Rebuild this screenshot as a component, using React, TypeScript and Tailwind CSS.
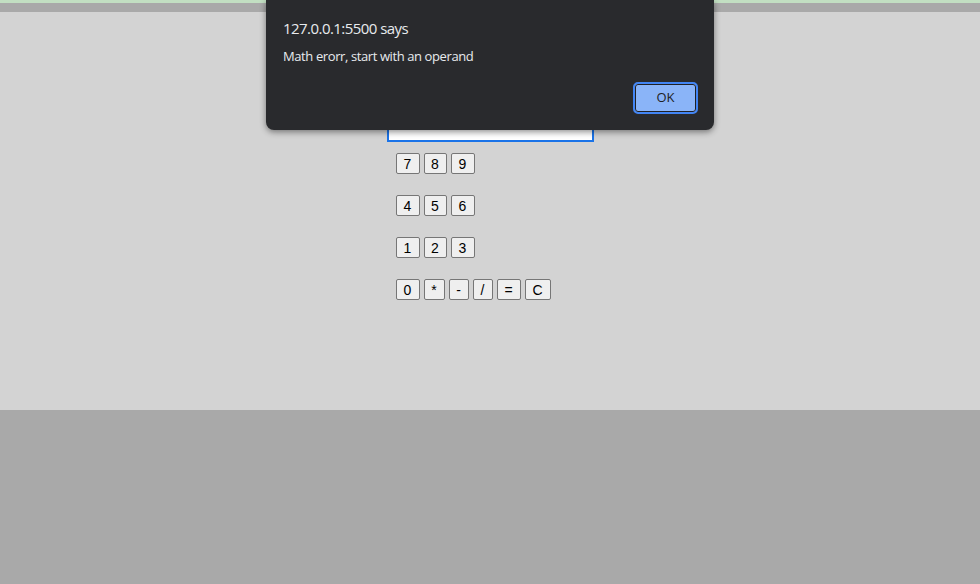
import React from 'react';

const rows = [
  [{ k: '7', w: 'w-[24px]' }, { k: '8', w: 'w-[23px]' }, { k: '9', w: 'w-[24px]' }],
  [{ k: '4', w: 'w-[24px]' }, { k: '5', w: 'w-[23px]' }, { k: '6', w: 'w-[24px]' }],
  [{ k: '1', w: 'w-[24px]' }, { k: '2', w: 'w-[23px]' }, { k: '3', w: 'w-[24px]' }],
  [
    { k: '0', w: 'w-[24px]' },
    { k: '*', w: 'w-[21px]' },
    { k: '-', w: 'w-[20px]' },
    { k: '/', w: 'w-[20px]' },
    { k: '=', w: 'w-[24px]' },
    { k: 'C', w: 'w-[26px]' },
  ],
];

const KeyButton = ({ label, w }: { label: string; w: string }) => (
  <button
    className={`${w} h-[21px] p-0 bg-[#efefef] border border-[#767676] rounded-[2px] text-[14px] leading-none text-black font-['Liberation_Sans',Arial,sans-serif] flex items-center justify-center`}
  >
    {label}
  </button>
);

const AlertDialog = () => (
  <div className="absolute left-[266px] top-0 w-[448px] h-[130px] bg-[#292a2d] rounded-b-[8px] shadow-[0_2px_6px_rgba(0,0,0,0.45)] pl-[17px] pr-[16px] pt-[17px] font-['Open_Sans','Noto_Sans',sans-serif] text-[#e8eaed]">
    <div className="text-[15px] leading-[22px] tracking-[-0.55px]">127.0.0.1:5500 says</div>
    <div className="text-[13px] leading-[20px] tracking-[-0.4px] mt-[7px]">Math erorr, start with an operand</div>
    <div className="flex justify-end mt-[16px]">
      <button className="w-[65px] h-[32px] rounded-[5px] border-2 border-[#4285f4] bg-[#8ab4f8] p-0 flex items-center justify-center">
        <span className="w-full h-full rounded-[3px] border border-[#202124] flex items-center justify-center text-[13px] text-[#202124]">
          OK
        </span>
      </button>
    </div>
  </div>
);

export default function App() {
  return (
    <div className="relative w-[980px] h-[584px] bg-[#a9a9a9] overflow-hidden">
      <div className="h-[3px] bg-[#c2dfc2]" />
      <div className="h-[9px] bg-[#a9a9a9]" />
      <div className="h-[398px] bg-[#d3d3d3] flex justify-center">
        <div className="w-[207px] pt-[109px]">
          <input
            className="block w-full h-[21px] bg-white border-2 border-[#1a73e8] outline-none"
            readOnly
          />
          <div className="flex flex-col gap-[21px] pt-[11px] pl-[9px]">
            {rows.map((row, i) => (
              <div key={i} className="flex gap-[4px]">
                {row.map((b) => (
                  <KeyButton key={b.k} label={b.k} w={b.w} />
                ))}
              </div>
            ))}
          </div>
        </div>
      </div>
      <AlertDialog />
    </div>
  );
}
